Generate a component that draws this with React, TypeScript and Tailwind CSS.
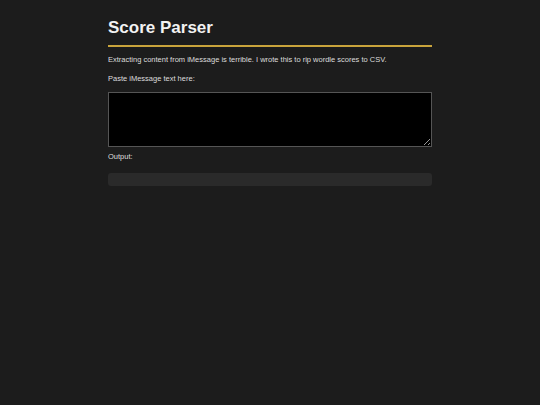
export default function App() {
  return (
    <div className="min-h-screen bg-[#1c1c1c] font-['Liberation_Sans',Arial,sans-serif] text-[#e6e6e6]">
      <div className="mx-auto w-[324px] pt-[18px]">
        {/* Header */}
        <h1 className="border-b-2 border-[#c9a43c] pb-[7px] text-[17px] leading-[20px] font-bold text-[#f2f2f2]">
          Score Parser
        </h1>

        <p className="mt-[8px] text-[7.5px] leading-[9px] text-[#dcdcdc]">
          Extracting content from iMessage is terrible. I wrote this to rip wordle scores to CSV.
        </p>

        <label className="mt-[10px] block text-[7.5px] leading-[9px] text-[#dcdcdc]">
          Paste iMessage text here:
        </label>

        <textarea className="mt-[9px] block h-[55px] w-full resize-y border border-[#555] bg-black p-1 text-[8px] text-white outline-none" />

        <div className="mt-[5px] text-[7.5px] leading-[9px] text-[#dcdcdc]">Output:</div>

        {/* Output */}
        <div className="mt-[12px] h-[13px] w-full rounded-[3px] bg-[#2a2a2a]" />
      </div>
    </div>
  )
}
